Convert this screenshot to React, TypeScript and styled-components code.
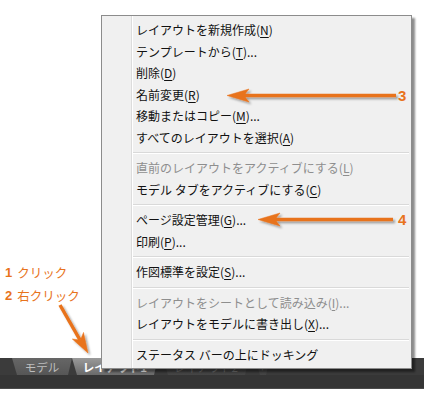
import * as React from 'react';
import styled, { createGlobalStyle } from 'styled-components';

const ORANGE = '#E8731C';
const JP = '"Noto Sans CJK JP", "Noto Sans", "Liberation Sans", sans-serif';

const GlobalStyle = createGlobalStyle`
    html, body {
        margin: 0;
        padding: 0;
        background: #fff;
        font-family: ${JP};
    }
`;

const Page = styled.div`
    position: relative;
    width: 441px;
    height: 402px;
    display: flex;
    flex-direction: column;
    overflow: hidden;
    background: #fff;
`;

const Workspace = styled.div`
    flex: 0 0 358px;
    display: flex;
    flex-direction: column;
    justify-content: flex-end;
    gap: 4px;
    padding: 0 0 53px 5px;
    box-sizing: border-box;
`;

const Step = styled.div`
    display: flex;
    align-items: center;
    gap: 5px;
    color: ${ORANGE};
    font-size: 12.5px;
    line-height: 19px;
`;

const StepNo = styled.span`
    font-family: "Liberation Sans", Arial, sans-serif;
    font-weight: bold;
    font-size: 13px;
`;

const StatusBar = styled.div`
    width: 424px;
    height: 31px;
    display: flex;
    flex-direction: column;
    background: #3b3b3b;
`;

const TabStrip = styled.div`
    height: 17px;
    display: flex;
    padding-left: 12px;
    gap: 2px;
`;

type TabKind = 'normal' | 'active' | 'dim';

const Tab = styled.div<{ $kind: TabKind; $w: number; $gap?: number }>`
    width: ${p => p.$w}px;
    margin-left: ${p => p.$gap ?? 0}px;
    height: 17px;
    display: flex;
    align-items: center;
    justify-content: center;
    font-size: 11.5px;
    clip-path: polygon(0 0, 100% 0, calc(100% - 4px) 100%, 5px 100%);
    background: ${p =>
        p.$kind === 'active'
            ? 'linear-gradient(#9a9a9a, #6a6a6a)'
            : p.$kind === 'normal'
            ? 'linear-gradient(#666, #565656)'
            : 'linear-gradient(#4c4c4c, #444)'};
    color: ${p => (p.$kind === 'active' ? '#fff' : p.$kind === 'normal' ? '#bdbdbd' : '#737373')};
    font-weight: ${p => (p.$kind === 'active' ? 'bold' : 'normal')};
`;

const BarFloor = styled.div`
    flex: 1;
    background: #353535;
    border-bottom: 1px solid #4b4b4b;
`;

const Menu = styled.div`
    position: absolute;
    left: 101px;
    top: 15px;
    width: 311px;
    box-sizing: border-box;
    border: 1px solid #8c8c8c;
    padding: 3px 0;
    z-index: 2;
    background: linear-gradient(
        to right,
        #f0f0f0 29px,
        #dcdcdc 29px,
        #dcdcdc 30px,
        #fff 30px,
        #fff 31px,
        #f0f0f0 31px
    );
    box-shadow: 3px 3px 2px rgba(0, 0, 0, 0.45);
`;

const MenuItem = styled.div<{ $disabled?: boolean }>`
    height: 21.5px;
    line-height: 21.5px;
    padding-left: 34px;
    font-size: 12px;
    white-space: nowrap;
    color: ${p => (p.$disabled ? '#8e8e8e' : '#111')};
    u {
        text-decoration: underline;
        text-underline-offset: 2px;
    }
`;

const Separator = styled.div`
    height: 9px;
    margin: 0 2px 0 31px;
    background: linear-gradient(
        transparent 4px,
        #d9d9d9 4px,
        #d9d9d9 5px,
        #fff 5px,
        #fff 6px,
        transparent 6px
    );
`;

const Overlay = styled.svg`
    position: absolute;
    left: 0;
    top: 0;
    z-index: 3;
    pointer-events: none;
`;

type Entry = { text: string; key?: string; tail?: string; disabled?: boolean } | 'sep';

const entries: Entry[] = [
    { text: 'レイアウトを新規作成', key: 'N' },
    { text: 'テンプレートから', key: 'T', tail: '...' },
    { text: '削除', key: 'D' },
    { text: '名前変更', key: 'R' },
    { text: '移動またはコピー', key: 'M', tail: '...' },
    { text: 'すべてのレイアウトを選択', key: 'A' },
    'sep',
    { text: '直前のレイアウトをアクティブにする', key: 'L', disabled: true },
    { text: 'モデル タブをアクティブにする', key: 'C' },
    'sep',
    { text: 'ページ設定管理', key: 'G', tail: '...' },
    { text: '印刷', key: 'P', tail: '...' },
    'sep',
    { text: '作図標準を設定', key: 'S', tail: '...' },
    'sep',
    { text: 'レイアウトをシートとして読み込み', key: 'I', tail: '...', disabled: true },
    { text: 'レイアウトをモデルに書き出し', key: 'X', tail: '...' },
    'sep',
    { text: 'ステータス バーの上にドッキング' },
];

export default function App() {
    return (
        <Page>
            <GlobalStyle />
            <Workspace>
                <Step>
                    <StepNo>1</StepNo>クリック
                </Step>
                <Step>
                    <StepNo>2</StepNo>右クリック
                </Step>
            </Workspace>
            <StatusBar>
                <TabStrip>
                    <Tab $kind="normal" $w={60}>モデル</Tab>
                    <Tab $kind="active" $w={86} $gap={-2}>レイアウト1</Tab>
                    <Tab $kind="dim" $w={86} $gap={3}>レイアウト2</Tab>
                    <Tab $kind="dim" $w={15} $gap={4}>+</Tab>
                </TabStrip>
                <BarFloor />
            </StatusBar>

            <Menu>
                {entries.map((e, i) =>
                    e === 'sep' ? (
                        <Separator key={`sep-${i}`} />
                    ) : (
                        <MenuItem key={`item-${i}`} $disabled={e.disabled}>
                            {e.text}
                            {e.key && (
                                <>
                                    (<u>{e.key}</u>)
                                </>
                            )}
                            {e.tail}
                        </MenuItem>
                    )
                )}
            </Menu>

            <Overlay width={441} height={402} viewBox="0 0 441 402">
                <defs>
                    <filter id="sh" x="-20%" y="-50%" width="140%" height="200%">
                        <feDropShadow dx="2" dy="2" stdDeviation="1.2" floodColor="#000" floodOpacity="0.35" />
                    </filter>
                </defs>
                <g filter="url(#sh)" fill={ORANGE} stroke={ORANGE}>
                    <line x1={396} y1={95.5} x2={243} y2={95.5} strokeWidth={3.5} />
                    <polygon points="227,95.5 249,89 244,95.5 249,102" strokeWidth={0.5} />
                    <line x1={393} y1={219.5} x2={274} y2={219.5} strokeWidth={3.5} />
                    <polygon points="258,219.5 280,213 275,219.5 280,226" strokeWidth={0.5} />
                    <line x1={60} y1={305} x2={80} y2={340} strokeWidth={3.5} />
                    <polygon points="88,353 72.3,339 80.4,340 83.5,332.4" strokeWidth={0.5} />
                </g>
                <g fill={ORANGE} fontFamily='"Liberation Sans", Arial, sans-serif' fontWeight="bold" fontSize="15">
                    <text x={398} y={101}>3</text>
                    <text x={398} y={225}>4</text>
                </g>
            </Overlay>
        </Page>
    );
}
